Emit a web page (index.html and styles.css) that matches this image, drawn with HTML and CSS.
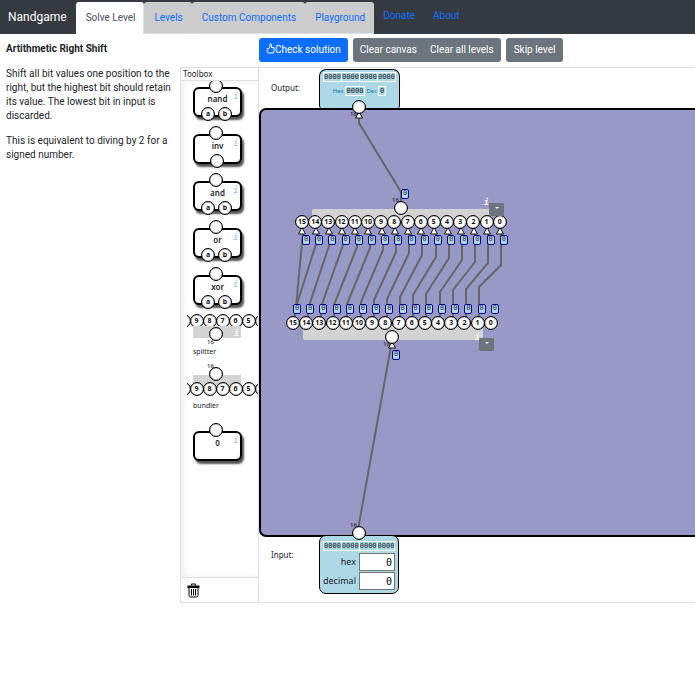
FILE: index.html
```html
<!DOCTYPE html>
<html lang="en">
<head>
<meta charset="utf-8">
<title>Nandgame</title>
<link rel="stylesheet" href="styles.css">
</head>
<body>
<header class="navbar">
  <a class="brand" href="#">Nandgame</a>
  <nav class="tabs">
    <a class="tab tab-active" href="#">Solve Level</a>
    <a class="tab" href="#">Levels</a>
    <a class="tab" href="#">Custom Components</a>
    <a class="tab" href="#">Playground</a>
  </nav>
  <nav class="links">
    <a href="#">Donate</a>
    <a href="#">About</a>
  </nav>
</header>

<main class="layout">
  <section class="level">
    <h1>Artithmetic Right Shift</h1>
    <p>Shift all bit values one position to the right, but the highest bit should retain its value. The lowest bit in input is discarded.</p>
    <p>This is equivalent to diving by 2 for a signed number.</p>
  </section>

  <section class="editor">
    <div class="toolbar">
      <button class="btn btn-primary" type="button"><svg class="thumb" viewBox="0 0 9 11" aria-hidden="true"><path d="M1.5 5.5H3L4 3.5V1.2Q4.9.2 5.5 1.4V4.5H8V8.5L7.3 10H2.3L1 8Z"/></svg>Check solution</button>
      <div class="btn-group">
        <button class="btn" type="button">Clear canvas</button>
        <button class="btn" type="button">Clear all levels</button>
      </div>
      <button class="btn" type="button">Skip level</button>
    </div>

    <div class="workspace">
      <aside class="toolbox">
        <h2>Toolbox</h2>
        <div class="parts">
          <div class="part"><span class="pin pin-top"></span><span class="info">i</span>nand<span class="pins-bottom"><span class="pin">a</span><span class="pin">b</span></span></div>
          <div class="part"><span class="pin pin-top"></span><span class="info">i</span>inv<span class="pins-bottom"><span class="pin"></span></span></div>
          <div class="part"><span class="pin pin-top"></span><span class="info">i</span>and<span class="pins-bottom"><span class="pin">a</span><span class="pin">b</span></span></div>
          <div class="part"><span class="pin pin-top"></span><span class="info">i</span>or<span class="pins-bottom"><span class="pin">a</span><span class="pin">b</span></span></div>
          <div class="part"><span class="pin pin-top"></span><span class="info">i</span>xor<span class="pins-bottom"><span class="pin">a</span><span class="pin">b</span></span></div>
          <div class="bus">
            <div class="bus-pins"><span class="pin"></span><span class="pin">9</span><span class="pin">8</span><span class="pin">7</span><span class="pin">6</span><span class="pin">5</span><span class="pin"></span></div>
            <div class="bus-body"><span class="pin bus-low"></span><span class="width width-low">16</span><span class="info info-light">i</span></div>
            <div class="bus-name">splitter</div>
          </div>
          <div class="bus bus-flipped">
            <div class="bus-body"><span class="pin bus-high"></span><span class="width width-high">16</span></div>
            <div class="bus-pins"><span class="pin"></span><span class="pin">9</span><span class="pin">8</span><span class="pin">7</span><span class="pin">6</span><span class="pin">5</span><span class="pin"></span></div>
            <div class="bus-name">bundler</div>
          </div>
          <div class="part"><span class="pin pin-top"></span><span class="info">i</span>0</div>
        </div>
        <div class="trash">
          <button type="button" aria-label="Delete"><svg viewBox="0 0 12 15"><path class="solid" d="M0 2.5H12V5H0Z"/><path class="line" d="M4 2.5V1H8V2.5M1.5 5V12.5Q1.5 14 3 14H9Q10.5 14 10.5 12.5V5M4 6V12.5M6 6V12.5M8 6V12.5"/></svg></button>
        </div>
      </aside>

      <div class="stage">
        <div class="io">
          <span class="io-label">Output:</span>
          <div class="io-card io-out">
            <div class="bits"><span>0000</span><span>0000</span><span>0000</span><span>0000</span></div>
            <div class="readout">Hex <b>0000</b> Dec <b>0</b></div>
          </div>
        </div>
        <div class="board"></div>
        <div class="io io-bottom">
          <span class="io-label">Input:</span>
          <div class="io-card io-in">
            <div class="bits"><span>0000</span><span>0000</span><span>0000</span><span>0000</span></div>
            <div class="field"><label for="hex">hex</label><input id="hex" type="text" value="0"></div>
            <div class="field"><label for="dec">decimal</label><input id="dec" type="text" value="0"></div>
          </div>
        </div>

        <div class="slab slab-bundler"></div>
        <div class="slab slab-splitter"></div>

        <svg class="wires" viewBox="259 68 436 534" width="436" height="534" aria-hidden="true">
          <defs><path id="arrow" d="M0-3.5 3.5 3H-3.5Z"/></defs>
          <g class="wire">
            <path d="M359 116V123L401 192V208"/>
            <path d="M391 346 359 524V533"/>
            <path d="M501 232V265L479 287V320"/>
            <path d="M488 232V263L466 289V320"/>
            <path d="M475 232V262L453 290V320"/>
            <path d="M462 232V260L440 292V320"/>
            <path d="M449 232V258L426 294V320"/>
            <path d="M436 232V257L413 295V320"/>
            <path d="M422 232V255L400 297V320"/>
            <path d="M409 232V253L387 299V320"/>
            <path d="M396 232V252L374 300V320"/>
            <path d="M383 232V250L361 302V320"/>
            <path d="M370 232V248L347 304V320"/>
            <path d="M357 232V247L334 305V320"/>
            <path d="M343 232V245L321 307V320"/>
            <path d="M330 232V243L308 309V320"/>
            <path d="M317 232V241L296 307L294 320"/>
            <path d="M303 232L296 307L294 320"/>
          </g>
          <g class="arrows">
            <use href="#arrow" x="359" y="115"/><use href="#arrow" x="392" y="345"/>
            <use href="#arrow" x="302" y="231"/><use href="#arrow" x="316" y="231"/><use href="#arrow" x="329" y="231"/><use href="#arrow" x="342" y="231"/><use href="#arrow" x="355" y="231"/><use href="#arrow" x="368" y="231"/><use href="#arrow" x="382" y="231"/><use href="#arrow" x="395" y="231"/><use href="#arrow" x="408" y="231"/><use href="#arrow" x="421" y="231"/><use href="#arrow" x="434" y="231"/><use href="#arrow" x="448" y="231"/><use href="#arrow" x="461" y="231"/><use href="#arrow" x="474" y="231"/><use href="#arrow" x="487" y="231"/><use href="#arrow" x="500" y="231"/>
          </g>
        </svg>

        <div class="row bundler-pins"><span class="pin">15</span><span class="pin">14</span><span class="pin">13</span><span class="pin">12</span><span class="pin">11</span><span class="pin">10</span><span class="pin">9</span><span class="pin">8</span><span class="pin">7</span><span class="pin">6</span><span class="pin">5</span><span class="pin">4</span><span class="pin">3</span><span class="pin">2</span><span class="pin">1</span><span class="pin">0</span></div>
        <div class="row bundler-tags"><span class="tag">0</span><span class="tag">0</span><span class="tag">0</span><span class="tag">0</span><span class="tag">0</span><span class="tag">0</span><span class="tag">0</span><span class="tag">0</span><span class="tag">0</span><span class="tag">0</span><span class="tag">0</span><span class="tag">0</span><span class="tag">0</span><span class="tag">0</span><span class="tag">0</span><span class="tag">0</span></div>
        <div class="row splitter-tags"><span class="tag">0</span><span class="tag">0</span><span class="tag">0</span><span class="tag">0</span><span class="tag">0</span><span class="tag">0</span><span class="tag">0</span><span class="tag">0</span><span class="tag">0</span><span class="tag">0</span><span class="tag">0</span><span class="tag">0</span><span class="tag">0</span><span class="tag">0</span><span class="tag">0</span><span class="tag">0</span></div>
        <div class="row splitter-pins"><span class="pin">15</span><span class="pin">14</span><span class="pin">13</span><span class="pin">12</span><span class="pin">11</span><span class="pin">10</span><span class="pin">9</span><span class="pin">8</span><span class="pin">7</span><span class="pin">6</span><span class="pin">5</span><span class="pin">4</span><span class="pin">3</span><span class="pin">2</span><span class="pin">1</span><span class="pin">0</span></div>

        <span class="width out-width">16</span><span class="pin out-pin"></span>
        <span class="width bundler-width">16</span><span class="pin bundler-out"></span><span class="tag bundler-tag">0</span>
        <span class="width splitter-width">16</span><span class="pin splitter-in"></span><span class="tag splitter-tag">0</span>
        <span class="width in-width">16</span><span class="pin in-pin"></span>
        <span class="info info-light bundler-info">i</span><button class="menu bundler-menu" type="button" aria-label="Bundler menu"></button>
        <span class="info info-light splitter-info">i</span><button class="menu splitter-menu" type="button" aria-label="Splitter menu"></button>
      </div>
    </div>
  </section>
</main>
</body>
</html>
```
FILE: styles.css
```css
* { box-sizing: border-box; }

body {
  margin: 0;
  font: 10px/14px Roboto, sans-serif;
  color: #212529;
  background: #fff;
}

a { color: #0d6efd; text-decoration: none; }

/* Navigation */
.navbar {
  display: flex;
  height: 34px;
  background: #343a40;
}
.brand {
  padding: 0 9px 0 8px;
  font-size: 12px;
  line-height: 34px;
  color: #fff;
}
.tabs {
  display: flex;
  margin-top: 2px;
}
.tab {
  padding: 0 8px 0 9px;
  border: 1px solid #ccc;
  border-bottom-color: #dee2e6;
  border-radius: 3px 3px 0 0;
  line-height: 29px;
  background: #ccc;
}
.tab-active {
  color: #495057;
  background: #fff;
  border-color: #fff #dee2e6 #fff #fff;
}
.links {
  display: flex;
  gap: 18px;
  padding: 0 9px;
  line-height: 32px;
}

/* Page columns */
.layout {
  display: grid;
  grid-template-columns: 180px minmax(0, 1fr);
}
.level { padding: 8px 6px; }
.level h1 {
  margin: 0 0 11px;
  font-size: 10px;
  line-height: 14px;
  font-weight: 700;
}
.level p {
  margin: 0 0 11px;
  line-height: 14px;
}

.toolbar {
  display: flex;
  gap: 5px;
  padding: 4px 0 5px 79px;
}
.btn-group { display: flex; }
.btn {
  height: 24px;
  padding: 0 8px;
  border: 0;
  border-radius: 3px;
  font: 10px/22px Roboto, sans-serif;
  color: #fff;
  background: #6c757d;
}
.btn-primary { padding: 0 7px; background: #0d6efd; }
.btn-group .btn { padding: 0 7px; }
.btn-group .btn:first-child { border-radius: 3px 0 0 3px; padding-right: 6px; }
.btn-group .btn:last-child { border-radius: 0 3px 3px 0; }
.thumb {
  width: 9px;
  height: 11px;
  vertical-align: -1px;
  fill: none;
  stroke: #fff;
  stroke-width: 1;
}

.workspace {
  display: grid;
  grid-template-columns: 78px minmax(0, 1fr);
  border: 1px solid #dee2e6;
  border-right: 0;
}

/* Toolbox */
.toolbox {
  display: flex;
  flex-direction: column;
  border-right: 1px solid #dee2e6;
}
.toolbox h2 {
  margin: 0;
  padding: 0 2px;
  border-bottom: 1px solid #dee2e6;
  font: 8px/12px "Noto Sans", sans-serif;
}
.parts {
  flex: 1;
  overflow: hidden;
  padding: 6px 0 0 6px;
  box-shadow: inset 3px 0 6px #eee;
  font-family: "Noto Sans", sans-serif;
}
.part {
  position: relative;
  width: 49px;
  height: 30px;
  margin: 0 0 17px 6px;
  border: 2px solid #000;
  border-radius: 6px;
  font-size: 8px;
  font-weight: 600;
  line-height: 20px;
  text-align: center;
  background: #fff;
  box-shadow: 2px 3px 2px #555;
}
.pin {
  flex: none;
  display: block;
  width: 14px;
  height: 14px;
  border: 1px solid #000;
  border-radius: 50%;
  box-shadow: inset 0 0 1px #000;
  font: 700 7px/12px "Noto Sans", sans-serif;
  text-align: center;
  color: #111;
  background: #fff;
}
.pin-top {
  position: absolute;
  top: -10px;
  left: 14px;
}
.pins-bottom {
  position: absolute;
  bottom: -6px;
  left: 6px;
  width: 31px;
  display: flex;
  justify-content: center;
  gap: 3px;
}
.info {
  position: absolute;
  top: 3px;
  right: 2px;
  font: italic 700 8px/10px "DejaVu Sans Mono", monospace;
  color: #9cd3e6;
}
.info-light { color: #fff; }

.bus {
  height: 48px;
  margin: -8px 0 9px;
  overflow: hidden;
}
.bus-flipped {
  height: 50px;
  margin-bottom: 18px;
}
.bus-pins {
  position: relative;
  display: flex;
  justify-content: center;
}
.bus-pins .pin + .pin, .row .pin + .pin { margin-left: -1px; }
.bus-body {
  position: relative;
  width: 48px;
  height: 12px;
  margin: -2px 0 8px 6px;
  background: #d3d3d3;
}
.bus-flipped .bus-body { margin: 12px 0 -5px 6px; }
.bus-name {
  margin-left: 6px;
  font-size: 7px;
  line-height: 12px;
}
.bus-flipped .bus-name { margin-top: 4px; }
.bus-low, .bus-high { position: absolute; left: 16px; }
.bus-low { top: 1px; }
.bus-high { top: -8px; }
.width {
  position: absolute;
  font: 500 6px/8px "Noto Sans", sans-serif;
}
.width-low { left: 14px; top: 12px; }
.width-high { left: 14px; top: -13px; }

.trash {
  height: 25px;
  padding: 5px 6px;
  border-top: 1px solid #dee2e6;
}
.trash button { display: block; padding: 0; border: 0; background: none; }
.trash svg { display: block; width: 13px; height: 15px; }
.solid { fill: #000; }
.line { fill: none; stroke: #000; }

/* Stage */
.stage {
  position: relative;
  display: grid;
  grid-template-rows: 40px 429px 65px;
  overflow: hidden;
  font-family: "Noto Sans", sans-serif;
}
.board {
  border: solid #000;
  border-width: 2px 0 2px 2px;
  border-radius: 7px 0 0 7px;
  background: #9999c8;
}
.io {
  display: grid;
  grid-template-columns: 48px 81px;
  align-items: start;
  padding-left: 12px;
}
.io-label {
  font-size: 8px;
  line-height: 40px;
}
.io-bottom .io-label { line-height: 36px; }
.io-in, .io-out { border: 1px solid #000; }
.io-card {
  padding: 3px 3px 0;
  border-radius: 7px;
  background: #add8e6;
}
.io-out {
  height: 40px;
  margin-top: 1px;
  border-bottom: 0;
  border-radius: 7px 7px 4px 4px;
  padding-top: 2px;
}
.io-in {
  position: relative;
  width: 80px;
  height: 59px;
  margin-top: -2px;
  padding-top: 5px;
}
.bits {
  display: flex;
  border: 1px solid #fff;
  font: 7px/8px "DejaVu Sans Mono", monospace;
}
.bits span {
  flex: 1;
  text-align: center;
}
.bits span + span { border-left: 1px solid #fff; }
.readout {
  display: flex;
  justify-content: center;
  gap: 1px;
  margin-top: 4px;
  font-size: 6px;
  line-height: 10px;
  color: #077a9b;
}
.readout b {
  padding: 0 1px;
  border: 1px solid #fff;
  font: 7px/8px "DejaVu Sans Mono", monospace;
  color: #222;
}
.field {
  display: flex;
  justify-content: flex-end;
  align-items: center;
  gap: 3px;
  margin-top: 1px;
  font-size: 9px;
}
.field input {
  width: 36px;
  height: 18px;
  padding: 0 2px;
  border: 1px solid #767676;
  font: 10px/14px "DejaVu Sans Mono", monospace;
  text-align: right;
}
.bits + .field { margin-top: 2px; }

/* Circuit items on the free canvas */
.wires { position: absolute; left: 0; top: 0; }
.wire { fill: none; stroke: #666; stroke-width: 2; }
.arrows { fill: #fff; stroke: #111; stroke-width: 1; }
.slab { position: absolute; width: 180px; height: 14px; background: #d3d3d3; border-radius: 2px; }
.slab-bundler { left: 53px; top: 141px; }
.slab-splitter { left: 44px; top: 258px; }
.row {
  position: absolute;
  display: flex;
  justify-content: space-between;
}
.bundler-pins, .splitter-pins { width: 212px; }
.bundler-tags, .splitter-tags { width: 206px; }
.bundler-pins { left: 36px; top: 147px; }
.bundler-tags { left: 43px; top: 167px; }
.splitter-tags { left: 34px; top: 236px; }
.splitter-pins { left: 27px; top: 248px; }
.tag {
  width: 8px;
  height: 10px;
  border: 1px solid #00009c;
  border-radius: 2px;
  font: 7px/7px "DejaVu Sans Mono", monospace;
  text-align: center;
  color: #333;
  background: #add8e6;
}
.out-pin, .bundler-out, .splitter-in, .in-pin,
.bundler-tag, .splitter-tag { position: absolute; }
.out-pin { left: 93px; top: 32px; }
.bundler-out { left: 135px; top: 133px; }
.splitter-in { left: 126px; top: 262px; }
.in-pin { left: 93px; top: 458px; }
.bundler-tag { left: 142px; top: 121px; }
.splitter-tag { left: 133px; top: 282px; }
.out-width { left: 91px; top: 42px; }
.bundler-width { left: 133px; top: 128px; }
.splitter-width { left: 124px; top: 272px; }
.in-width { left: 91px; top: 453px; }
.bundler-info { left: 225px; top: 130px; right: auto; }
.splitter-info { left: 216px; top: 265px; right: auto; }
.menu {
  position: absolute;
  width: 15px;
  height: 13px;
  padding: 0;
  border: 0;
  border-radius: 1px;
  background: #6c757d;
}
.menu::after {
  content: "";
  display: block;
  width: 0;
  margin: 0 auto 3px;
  border: 2px solid transparent;
  border-top-color: #fff;
  border-bottom: 0;
}
.bundler-menu { left: 230px; top: 135px; }
.splitter-menu { left: 220px; top: 270px; }
```
